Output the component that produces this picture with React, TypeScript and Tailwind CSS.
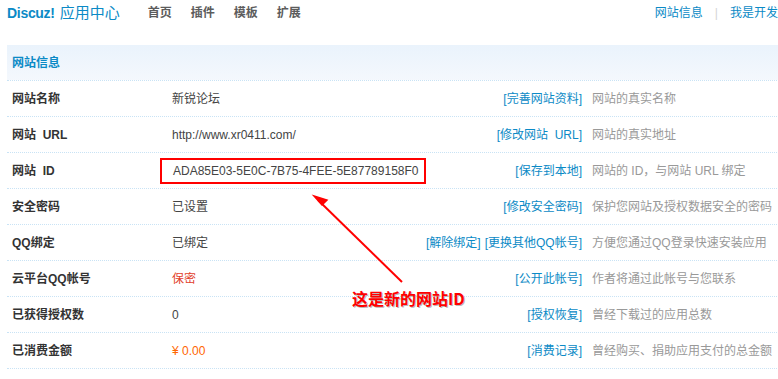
import React from 'react'

const rows = [
  { label: '网站名称', value: <span>新锐论坛</span>, actions: ['完善网站资料'], desc: '网站的真实名称' },
  { label: '网站  URL', value: <span>http://www.xr0411.com/</span>, actions: ['修改网站  URL'], desc: '网站的真实地址' },
  {
    label: '网站  ID',
    value: (
      <span className="inline-block border-2 border-[#ff0000] pl-[11px] pr-[10px] py-[2px] -ml-[12px] w-[266px] whitespace-nowrap">
        ADA85E03-5E0C-7B75-4FEE-5E87789158F0
      </span>
    ),
    actions: ['保存到本地'],
    desc: '网站的 ID，与网站 URL 绑定',
  },
  { label: '安全密码', value: <span>已设置</span>, actions: ['修改安全密码'], desc: '保护您网站及授权数据安全的密码' },
  { label: 'QQ绑定', value: <span>已绑定</span>, actions: ['解除绑定', '更换其他QQ帐号'], desc: '方便您通过QQ登录快速安装应用' },
  { label: '云平台QQ帐号', value: <span className="text-[#e2412b]">保密</span>, actions: ['公开此帐号'], desc: '作者将通过此帐号与您联系' },
  { label: '已获得授权数', value: <span>0</span>, actions: ['授权恢复'], desc: '曾经下载过的应用总数' },
  { label: '已消费金额', value: <span className="text-[#ff6600]">¥ 0.00</span>, actions: ['消费记录'], desc: '曾经购买、捐助应用支付的总金额' },
]

export default function App() {
  return (
    <div
      className="relative w-[778px] h-[379px] overflow-hidden bg-white text-[12px] text-[#333]"
      style={{ fontFamily: '"Liberation Sans", "Noto Sans CJK SC", sans-serif' }}
    >
      <header className="flex items-center justify-between w-[778px] h-[25px] pl-[7px]">
        <div className="flex items-center">
          <div className="flex items-center text-[#0b8ac6] leading-none">
            <span className="font-bold text-[14px] tracking-[-0.3px]">Discuz!</span>
            <span className="ml-[5px] text-[15px]">应用中心</span>
          </div>
          <nav className="flex items-center gap-[19px] ml-[28px] font-bold text-[#5c5c5c]">
            <a>首页</a>
            <a>插件</a>
            <a>模板</a>
            <a>扩展</a>
          </nav>
        </div>
        <div className="flex items-center text-[#0b8ac6] whitespace-nowrap">
          <a>网站信息</a>
          <span className="mx-[12px] text-[#d4d4d4]">|</span>
          <a>我是开发</a>
        </div>
      </header>

      <div className="ml-[7px] mt-[20px] w-[800px]">
        <div className="flex items-center h-[35px] pl-[5px] bg-gradient-to-b from-[#eaf3fc] to-[#f4f8fd] font-bold text-[#0b8ac6]">
          网站信息
        </div>
        {rows.map((r, i) => (
          <div key={i} className="flex items-center h-[36px] border-t border-dotted border-[#c9e3f5]">
            <div className="w-[165px] pl-[5px] font-bold whitespace-pre text-[#333]">{r.label}</div>
            <div className="w-[230px] text-[#444]">{r.value}</div>
            <div className="w-[180px] text-right text-[#0b8ac6] whitespace-pre">
              {r.actions.map((a, j) => (
                <span key={j} className={j > 0 ? 'ml-[4px]' : ''}>
                  [{a}]
                </span>
              ))}
            </div>
            <div className="pl-[10px] text-[#999] whitespace-pre">{r.desc}</div>
          </div>
        ))}
        <div className="border-t border-dotted border-[#c9e3f5]" />
      </div>

      <svg className="absolute left-0 top-0 pointer-events-none" width="778" height="379">
        <line x1="402" y1="282" x2="318" y2="200" stroke="#ff0000" strokeWidth="2" />
        <path d="M314 196 L327 200 L322 205 Z" fill="#ff0000" stroke="#ff0000" strokeWidth="1.5" />
      </svg>
      <div
        className="absolute left-[352px] top-[290px] text-[16px] font-bold text-[#ff0000] leading-none whitespace-nowrap [text-shadow:1px_1px_0_#bbb]"
        style={{ fontFamily: '"Noto Sans CJK SC", "Liberation Serif", serif' }}
      >
        这是新的网站ID
      </div>
    </div>
  )
}
